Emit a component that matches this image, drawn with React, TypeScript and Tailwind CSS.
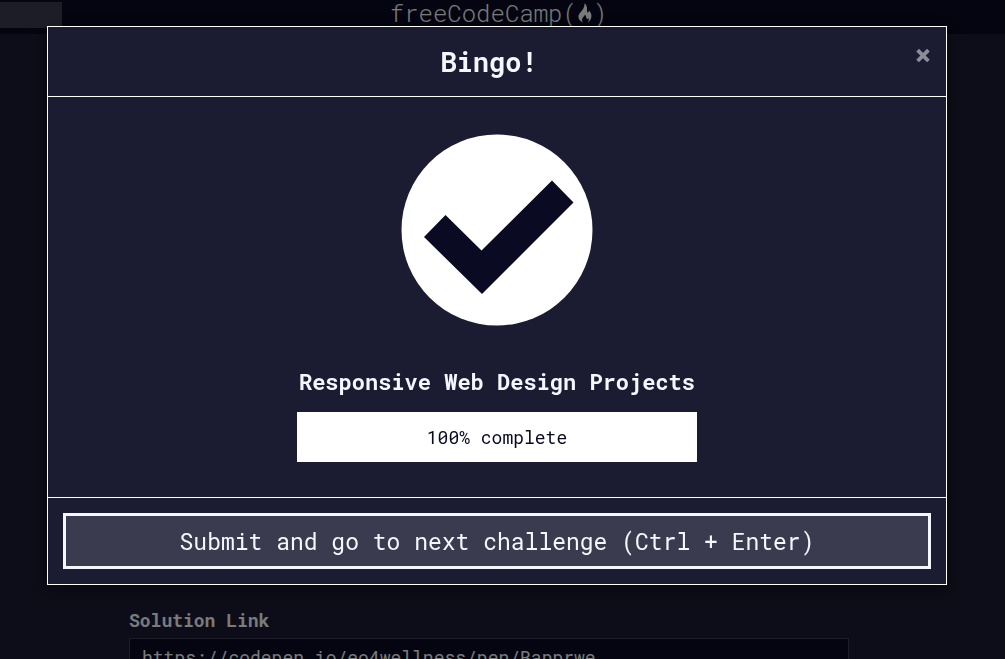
import { useState } from "react";

function Flame() {
  return (
    <svg viewBox="0 0 16 22" className="h-[22px] w-4" fill="currentColor" aria-hidden="true">
      <path d="M7.4 1.2C9.4 2.6 10.2 4.8 10 7.2C9.9 8.8 9.9 10.4 10.8 10.4C11.8 10.4 12 9.2 11.7 8.2C13.8 10 14.8 12.6 14.4 15C14 17.2 12.8 19.2 10.8 20.6C11.8 19 12 17.4 11.4 16C11 17 10.4 17.4 9.8 16.8C9 15.8 9.2 14 7.9 12.6C7.6 14.4 5.8 15 5.2 17C4.8 18.4 5.2 19.6 6.2 20.6C3.4 19.4 1.4 17.4 1.4 14.8C1.4 12 3.4 10.4 5 8.4C6.8 6.2 7.8 3.8 7.4 1.2Z" />
    </svg>
  );
}

function CheckBadge() {
  return (
    <svg viewBox="0 0 200 200" className="size-[200px]" aria-label="Passed" role="img">
      <circle cx="100" cy="100" r="95.5" fill="#ffffff" />
      <path d="M48.5 85L84.5 120.5L155 50.5L176.5 72.5L85 164L27 107Z" fill="#0a0a23" />
    </svg>
  );
}

function SiteHeader() {
  return (
    <header className="grid h-[34px] grid-cols-[1fr_auto_1fr] items-start bg-[#0a0a23] pr-2 text-[#f5f6f7]">
      <div className="mt-[2px] h-[26px] w-[62px] bg-[#3b3b4f]" />
      <a href="#top" className="flex items-center text-[24px] leading-[26px] font-light">
        <span>freeCodeCamp(</span>
        <Flame />
        <span>)</span>
      </a>
    </header>
  );
}

function SolutionForm() {
  return (
    <main className="flex justify-center pt-[571px] pr-[27px]">
      <form className="flex w-full max-w-[720px] flex-col">
        <label htmlFor="solution" className="pb-[3px] text-[18px] leading-[30px] font-bold text-[#f5f6f7]">
          Solution Link
        </label>
        <input
          id="solution"
          type="text"
          defaultValue="https://codepen.io/eo4wellness/pen/Bapprwe"
          className="h-[38px] w-full border border-[#3b3b4f] bg-[#0a0a23] px-3 text-[18px] text-[#f5f6f7]"
        />
      </form>
    </main>
  );
}

function CompletionDialog({ onClose }: { onClose: () => void }) {
  return (
    <div className="fixed inset-0 flex items-start justify-center bg-black/50 pt-[26px] pr-[11px]">
      <section
        role="dialog"
        aria-modal="true"
        aria-labelledby="dialog-title"
        className="w-full max-w-[900px] border border-white bg-[#1b1b32] text-[#f5f6ff] shadow-[0_5px_15px_rgba(0,0,0,0.5)]"
      >
        <header className="flex items-start border-b border-white p-[15px]">
          <h2 id="dialog-title" className="grow text-center text-[27px] leading-[39px] font-bold">
            Bingo!
          </h2>
          <button type="button" aria-label="Close" onClick={onClose} className="py-[6px] text-[#8d8d99]">
            <svg viewBox="0 0 16 16" className="size-4" stroke="currentColor" strokeWidth="3.8" aria-hidden="true">
              <path d="M2.6 2.2L13.4 13M13.4 2.2L2.6 13" />
            </svg>
          </button>
        </header>

        <div className="flex flex-col items-center px-4 pt-[33px] pb-[35px]">
          <CheckBadge />
          <h3 className="pt-[37px] pb-[15px] text-[22px] leading-[30px] font-bold">Responsive Web Design Projects</h3>
          <div className="w-full max-w-[400px] bg-white text-center text-[18px] leading-[50px] text-[#0a0a23]">
            100% complete
          </div>
        </div>

        <footer className="border-t border-white p-[15px]">
          <button
            type="button"
            className="w-full border-[3px] border-[#f5f6ff] bg-[#3b3b4f] text-[23px] leading-[50px]"
          >
            Submit and go to next challenge (Ctrl + Enter)
          </button>
        </footer>
      </section>
    </div>
  );
}

export default function App() {
  const [open, setOpen] = useState(true);
  return (
    <div className="h-screen overflow-hidden bg-[#1b1b32] font-['Roboto_Mono','DejaVu_Sans_Mono',monospace]">
      <SiteHeader />
      <SolutionForm />
      {open && <CompletionDialog onClose={() => setOpen(false)} />}
    </div>
  );
}
